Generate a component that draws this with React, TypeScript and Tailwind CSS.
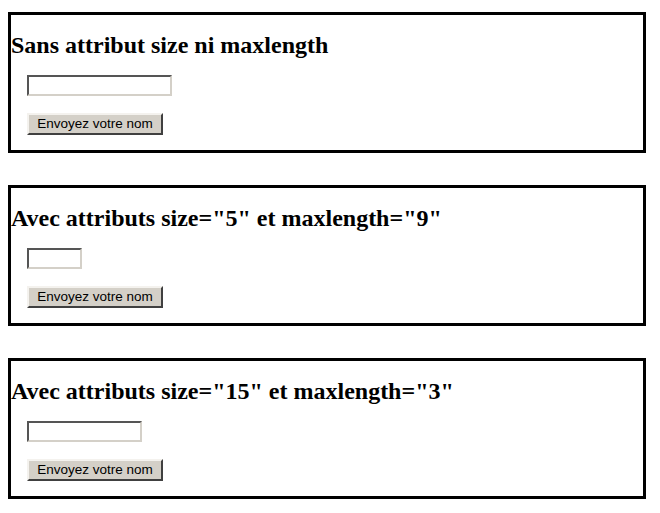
const SECTIONS = [
  { title: "Sans attribut size ni maxlength", inputWidth: "w-[145px]" },
  { title: 'Avec attributs size="5" et maxlength="9"', inputWidth: "w-[55px]" },
  { title: 'Avec attributs size="15" et maxlength="3"', inputWidth: "w-[115px]" },
];

function FormBox({ title, inputWidth }: { title: string; inputWidth: string }) {
  return (
    <div className="w-[638px] border-[3px] border-black pb-[15px] [&+&]:mt-[32px]">
      <h2 className="mt-[16px] text-[24px] leading-[28px] font-bold text-black font-['Liberation_Serif',serif] whitespace-nowrap">
        {title}
      </h2>
      <div className="pl-[16px] mt-[16px]">
        <input
          type="text"
          className={`${inputWidth} h-[21px] block bg-white border-2 border-t-[#555555] border-l-[#555555] border-b-[#d4d0c8] border-r-[#d4d0c8] outline-none`}
        />
        <button
          type="button"
          className="mt-[17px] block w-[136px] h-[22px] bg-[#d4d0c8] border-2 border-t-[#f4f2ee] border-l-[#f4f2ee] border-b-[#404040] border-r-[#404040] text-[13.5px] leading-none text-black font-['Liberation_Sans',Arial,sans-serif]"
        >
          Envoyez votre nom
        </button>
      </div>
    </div>
  );
}

export default function App() {
  return (
    <div className="min-h-[513px] bg-white pt-[12px] pl-[8px]">
      {SECTIONS.map((s) => (
        <FormBox key={s.title} title={s.title} inputWidth={s.inputWidth} />
      ))}
    </div>
  );
}
